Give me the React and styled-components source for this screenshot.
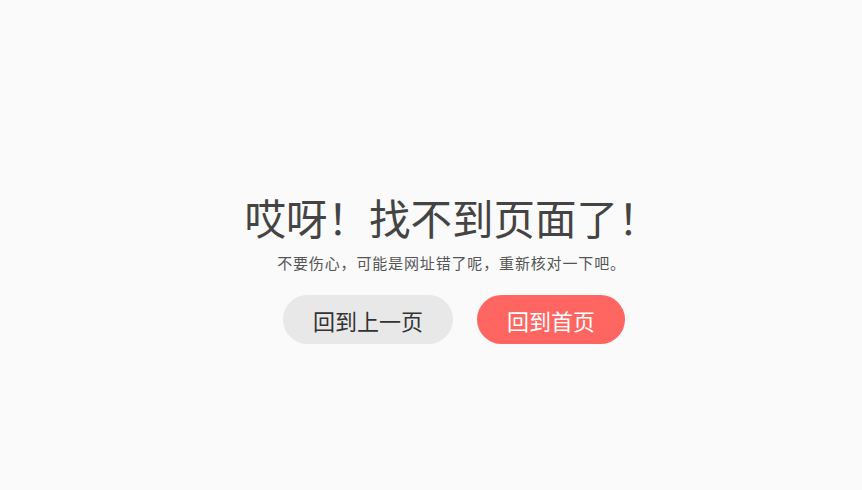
import React from 'react';
import styled, { createGlobalStyle } from 'styled-components';

const GlobalStyle = createGlobalStyle`
  html, body {
    margin: 0;
    padding: 0;
    background: #fafafa;
  }
  body {
    font-family: "Noto Sans CJK SC", "Noto Sans", sans-serif;
  }
`;

const Page = styled.div`
  width: 100%;
  height: 490px;
  display: flex;
  flex-direction: column;
  align-items: center;
  padding-top: 190px;
  padding-left: 46px;
  box-sizing: border-box;
`;

const Title = styled.h1`
  margin: 0 4px 0 0;
  font-size: 41.5px;
  font-weight: 400;
  line-height: 54px;
  color: #444;
`;

const Sub = styled.p`
  margin: 9px 5px 0 0;
  font-size: 15px;
  line-height: 20px;
  letter-spacing: 0.85px;
  color: #555;
`;

const Actions = styled.div`
  display: flex;
  gap: 24px;
  margin-top: 22px;
`;

const Btn = styled.button`
  height: 49px;
  width: ${p => p.$w}px;
  border: none;
  border-radius: 25px;
  font-family: inherit;
  font-size: 22px;
  cursor: pointer;
  background: ${p => (p.$primary ? '#ff6661' : '#e8e8e8')};
  color: ${p => (p.$primary ? '#fff' : '#333')};
`;

export default function App() {
  return (
    <>
      <GlobalStyle />
      <Page>
        <Title>哎呀！找不到页面了！</Title>
        <Sub>不要伤心，可能是网址错了呢，重新核对一下吧。</Sub>
        <Actions>
          <Btn $w={170}>回到上一页</Btn>
          <Btn $w={148} $primary>回到首页</Btn>
        </Actions>
      </Page>
    </>
  );
}
